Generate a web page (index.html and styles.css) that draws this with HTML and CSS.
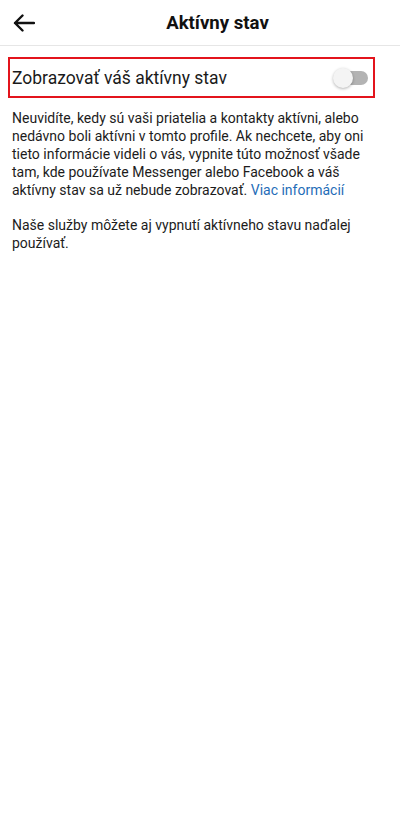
FILE: index.html
```html
<!DOCTYPE html>
<html lang="sk">
<head>
<meta charset="utf-8">
<title>Aktívny stav</title>
<link rel="stylesheet" href="styles.css">
</head>
<body>
<header class="topbar">
  <div class="back">
    <svg width="22" height="18" viewBox="0 0 22 18" fill="none" stroke="#111" stroke-width="2.4" stroke-linecap="round" stroke-linejoin="round">
      <path d="M21 9H2M9.5 1.5L2 9l7.5 7.5"/>
    </svg>
  </div>
  <h1 class="title">Aktívny stav</h1>
</header>
<main class="content">
  <div class="setting">
    <span class="setting-label">Zobrazovať váš aktívny stav</span>
    <span class="switch"><span class="knob"></span></span>
  </div>
  <p class="desc">Neuvidíte, kedy sú vaši priatelia a kontakty aktívni, alebo nedávno boli aktívni v tomto profile. Ak nechcete, aby oni tieto informácie videli o vás, vypnite túto možnosť všade tam, kde používate Messenger alebo Facebook a váš aktívny stav sa už nebude zobrazovať. <a class="link" href="#">Viac informácií</a></p>
  <p class="desc">Naše služby môžete aj vypnutí aktívneho stavu naďalej používať.</p>
</main>
</body>
</html>
```
FILE: styles.css
```css
html, body {
  margin: 0;
  padding: 0;
  background: #ffffff;
  font-family: Roboto, "Noto Sans", "Liberation Sans", sans-serif;
  color: #1c1c1c;
}
.topbar {
  display: flex;
  align-items: center;
  height: 45px;
  border-bottom: 1px solid #e6e6e6;
}
.back {
  display: flex;
  align-items: center;
  padding-left: 13px;
  padding-top: 1px;
}
.title {
  flex: 1;
  margin: 0;
  text-align: center;
  font-size: 18.6px;
  font-weight: 700;
  color: #111;
}
.content {
  padding: 11px 25px 0 8px;
}
.setting {
  display: flex;
  align-items: center;
  justify-content: space-between;
  height: 37px;
  border: 2px solid #e3141c;
  padding: 0 5px 0 2px;
}
.setting-label {
  font-size: 17.5px;
  color: #1a1a1a;
}
.switch {
  position: relative;
  display: block;
  width: 34px;
  height: 14px;
  border-radius: 7px;
  background: #b3b3b3;
}
.knob {
  position: absolute;
  left: -1px;
  top: -3px;
  width: 20px;
  height: 20px;
  border-radius: 50%;
  background: #f4f4f4;
  box-shadow: 0 1px 3px rgba(0,0,0,0.3);
}
.desc {
  margin: 11px 0 0 4px;
  font-size: 14px;
  line-height: 18px;
  color: #1c1c1c;
}
.desc + .desc {
  margin-top: 17px;
}
.link {
  color: #1f6db8;
  text-decoration: none;
}
```
